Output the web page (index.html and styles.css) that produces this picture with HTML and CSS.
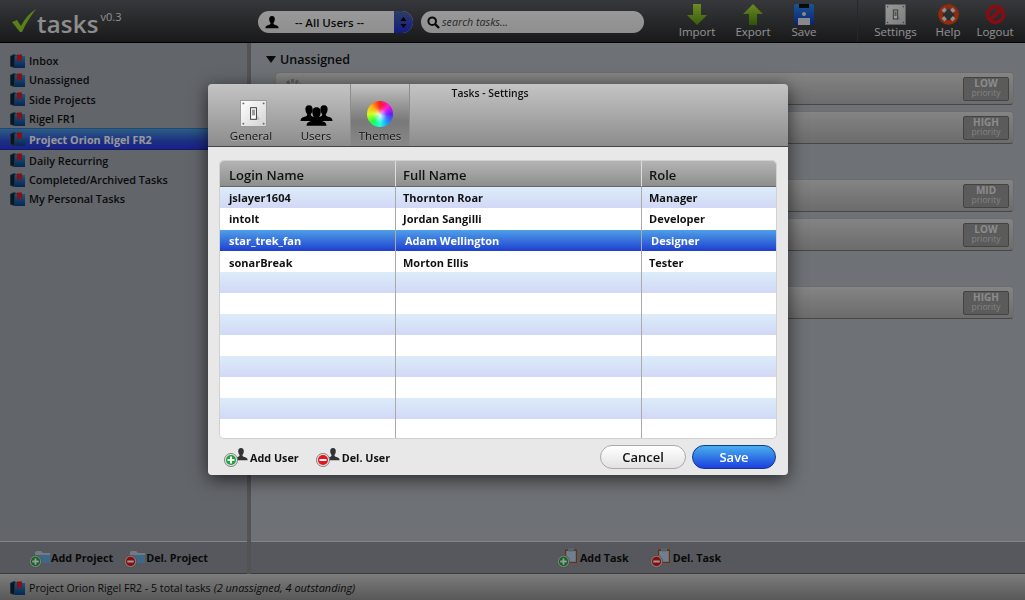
FILE: index.html
```html
<!DOCTYPE html>
<html lang="en">
<head>
    <meta charset="UTF-8">
    <title>Tasks</title>
    <link rel="stylesheet" href="styles.css">
</head>
<body>

    <svg class="defs" width="0" height="0">
        <defs>
            <linearGradient id="book-blue" x1="0" y1="0" x2="0" y2="1">
                <stop offset="0" stop-color="#2a8fd0"/>
                <stop offset="1" stop-color="#0d3f8c"/>
            </linearGradient>
            <linearGradient id="arrow-down" x1="0" y1="0" x2="0" y2="1">
                <stop offset="0" stop-color="#b4ea38"/>
                <stop offset="1" stop-color="#5f9a14"/>
            </linearGradient>
            <linearGradient id="arrow-up" x1="0" y1="0" x2="0" y2="1">
                <stop offset="0" stop-color="#b4ea38"/>
                <stop offset="1" stop-color="#4f8a10"/>
            </linearGradient>
            <linearGradient id="disk-blue" x1="0" y1="0" x2="0" y2="1">
                <stop offset="0" stop-color="#2a90f0"/>
                <stop offset="1" stop-color="#1438c8"/>
            </linearGradient>
            <linearGradient id="plate" x1="0" y1="0" x2="1" y2="1">
                <stop offset="0" stop-color="#ffffff"/>
                <stop offset="1" stop-color="#d2d2d2"/>
            </linearGradient>
            <symbol id="book" viewBox="0 0 15 14">
                <path d="M0 2 L4 0 L7 1.5 V14 L4 14 L0 12.5Z" fill="#27506e"/>
                <path d="M1 2.5 L4 1 V13 L1 12Z" fill="#16222e"/>
                <rect x="5" y="2" width="10" height="12" fill="url(#book-blue)"/>
                <path d="M7 0.5 H12 V8 L9.5 6 L7 8Z" fill="#e01b24"/>
            </symbol>
            <symbol id="plus" viewBox="0 0 14 14">
                <circle cx="7" cy="7" r="6.6" fill="#d8d8d8" stroke="#777" stroke-width=".8"/>
                <circle cx="7" cy="7" r="5" fill="#19a83a"/>
                <path d="M7 3.5 V10.5 M3.5 7 H10.5" stroke="#fff" stroke-width="2"/>
            </symbol>
            <symbol id="minus" viewBox="0 0 14 14">
                <circle cx="7" cy="7" r="6.6" fill="#d8d8d8" stroke="#777" stroke-width=".8"/>
                <circle cx="7" cy="7" r="5" fill="#e8141c"/>
                <path d="M3.5 7 H10.5" stroke="#fff" stroke-width="2.2"/>
            </symbol>
            <symbol id="person" viewBox="0 0 16 16">
                <path d="M8 1 C10.4 1 11.4 2.8 11.2 5 C11 7 10.2 8.2 9.6 9 C9.6 10.4 10.4 10.8 12 11.4 C14 12.1 15.4 12.6 15.6 15 H0.4 C.6 12.6 2 12.1 4 11.4 C5.6 10.8 6.4 10.4 6.4 9 C5.8 8.2 5 7 4.8 5 C4.6 2.8 5.6 1 8 1Z"/>
            </symbol>
            <symbol id="switch" viewBox="0 0 28 28">
                <rect x=".5" y=".5" width="27" height="27" fill="url(#plate)" stroke="#999"/>
                <circle cx="3.5" cy="3.5" r="1" fill="#666"/><circle cx="24.5" cy="3.5" r="1" fill="#666"/>
                <circle cx="3.5" cy="24.5" r="1" fill="#666"/><circle cx="24.5" cy="24.5" r="1" fill="#666"/>
                <path d="M16 14 L21 20 L16 21Z" fill="#c2c2c2"/>
                <rect x="11" y="8" width="6" height="12" fill="#fff" stroke="#333"/>
                <rect x="12.5" y="10" width="3" height="6" fill="#999"/>
            </symbol>
            <symbol id="clip" viewBox="0 0 12 15">
                <rect x="0" y="1.5" width="12" height="13.5" fill="#a8561c"/>
                <rect x="1.2" y="3" width="9.6" height="10.8" fill="#b9d4ee"/>
                <rect x="3" y="0" width="6" height="3.5" rx="1" fill="#8fa5b8"/>
            </symbol>
            <symbol id="folder" viewBox="0 0 15 12">
                <path d="M0 2 Q0 0 2 0 H6 L8 2 H15 V12 H0Z" fill="#68aee4"/>
                <path d="M0 2 Q0 0 2 0 H6 L8 2 H15 V4 H0Z" fill="#c3ccd4"/>
            </symbol>
        </defs>
    </svg>

    <div class="app">

        <!-- Top bar -->
        <header class="topbar">
            <div class="logo">
                <svg class="logo-check" width="25" height="24" viewBox="0 0 25 24">
                    <path d="M0 13 L5 11 L9 17 C13 9 18 4 24 0 C19 7 14 14 10 23 H8Z" fill="#96d42e"/>
                </svg>
                <span class="logo-text">tasks</span>
                <span class="logo-version">v0.3</span>
            </div>
            <div class="user-select">
                <svg class="pill-icon" width="14" height="14"><use href="#person"/></svg>
                <span class="user-select-label">-- All Users --</span>
                <span class="user-select-arrows">
                    <svg width="7" height="11" viewBox="0 0 7 11"><path d="M3.5 0 L6.5 4 H.5Z M.5 7 H6.5 L3.5 11Z"/></svg>
                </span>
            </div>
            <div class="search">
                <svg width="13" height="13" viewBox="0 0 13 13"><circle cx="5.2" cy="5.2" r="3.8" fill="none" stroke="#111" stroke-width="2"/><path d="M8 8 L12 12" stroke="#111" stroke-width="2.4"/></svg>
                <span class="search-text">search tasks...</span>
            </div>
            <nav class="tools">
                <a class="tool tool-import">
                    <svg width="20" height="21" viewBox="0 0 20 21"><path d="M6 0 H14 V11 H20 L10 21 L0 11 H6Z" fill="url(#arrow-down)"/></svg>
                    Import
                </a>
                <a class="tool tool-export">
                    <svg width="20" height="21" viewBox="0 0 20 21"><path d="M10 0 L20 10 H14 V21 H6 V10 H0Z" fill="url(#arrow-up)"/></svg>
                    Export
                </a>
                <a class="tool tool-save">
                    <svg width="20" height="21" viewBox="0 0 20 21"><rect width="20" height="21" rx="2" fill="url(#disk-blue)"/><rect x="5" y="0" width="10" height="4" fill="#111"/><rect x="4" y="14" width="12" height="7" fill="#e6e6e6"/><circle cx="10" cy="10" r="2" fill="#e6e6e6"/></svg>
                    Save
                </a>
            </nav>
            <nav class="tools tools-right">
                <a class="tool tool-settings">
                    <svg width="21" height="21"><use href="#switch"/></svg>
                    Settings
                </a>
                <a class="tool tool-help">
                    <svg width="23" height="21" viewBox="0 0 23 21"><circle cx="11.5" cy="10.5" r="8" fill="none" stroke="#f04a14" stroke-width="4.6"/><path d="M6 5 L8.5 7.5 M17 5 L14.5 7.5 M6 16 L8.5 13.5 M17 16 L14.5 13.5" stroke="#eee" stroke-width="4"/></svg>
                    Help
                </a>
                <a class="tool tool-logout">
                    <svg width="21" height="21" viewBox="0 0 21 21"><circle cx="10.5" cy="10.5" r="8" fill="none" stroke="#e8141c" stroke-width="3.4"/><path d="M5 16 L16 5" stroke="#e8141c" stroke-width="3.4"/></svg>
                    Logout
                </a>
            </nav>
        </header>

        <div class="columns">

            <!-- Project list -->
            <aside class="sidebar">
                <ul class="projects">
                    <li><svg class="book"><use href="#book"/></svg>Inbox</li>
                    <li><svg class="book"><use href="#book"/></svg>Unassigned</li>
                    <li><svg class="book"><use href="#book"/></svg>Side Projects</li>
                    <li><svg class="book"><use href="#book"/></svg>Rigel FR1</li>
                    <li class="active"><svg class="book"><use href="#book"/></svg>Project Orion Rigel FR2</li>
                    <li><svg class="book"><use href="#book"/></svg>Daily Recurring</li>
                    <li><svg class="book"><use href="#book"/></svg>Completed/Archived Tasks</li>
                    <li><svg class="book"><use href="#book"/></svg>My Personal Tasks</li>
                </ul>
                <div class="actions actions-side">
                    <a class="action">
                        <span class="action-icon"><svg class="action-folder" width="15" height="12"><use href="#folder"/></svg><svg class="action-badge" width="13" height="13"><use href="#plus"/></svg></span>
                        Add Project
                    </a>
                    <a class="action">
                        <span class="action-icon"><svg class="action-folder" width="15" height="12"><use href="#folder"/></svg><svg class="action-badge" width="13" height="13"><use href="#minus"/></svg></span>
                        Del. Project
                    </a>
                </div>
            </aside>

            <!-- Tasks -->
            <main class="main">
                <div class="task-list">
                    <section class="section">
                        <h3 class="section-title"><span class="arrow"></span>Unassigned</h3>
                        <div class="task">
                            <svg class="gear" width="22" height="22" viewBox="0 0 22 22"><circle cx="11" cy="11" r="7" fill="none" stroke="#999" stroke-width="4" stroke-dasharray="3 1.4"/></svg>
                            <div class="badge"><b>LOW</b><span>priority</span></div>
                        </div>
                        <div class="task"><div class="badge"><b>HIGH</b><span>priority</span></div></div>
                    </section>
                    <section class="section">
                        <div class="task"><div class="badge"><b>MID</b><span>priority</span></div></div>
                        <div class="task"><div class="badge"><b>LOW</b><span>priority</span></div></div>
                    </section>
                    <section class="section">
                        <div class="task"><div class="badge"><b>HIGH</b><span>priority</span></div></div>
                    </section>
                </div>
                <div class="actions actions-main">
                    <a class="action">
                        <span class="action-icon"><svg class="action-clip" width="12" height="15"><use href="#clip"/></svg><svg class="action-badge" width="13" height="13"><use href="#plus"/></svg></span>
                        Add Task
                    </a>
                    <a class="action">
                        <span class="action-icon"><svg class="action-clip" width="12" height="15"><use href="#clip"/></svg><svg class="action-badge" width="13" height="13"><use href="#minus"/></svg></span>
                        Del. Task
                    </a>
                </div>
            </main>
        </div>

        <footer class="statusbar">
            <svg class="book"><use href="#book"/></svg>
            <span>Project Orion Rigel FR2 - 5 total tasks</span>
            <em>(2 unassigned, 4 outstanding)</em>
        </footer>
    </div>

    <div class="overlay"></div>

    <!-- Settings dialog -->
    <div class="dialog">
        <div class="dialog-head">
            <div class="dialog-title">Tasks - Settings</div>
            <div class="tabs">
                <div class="tab tab-general">
                    <svg width="27" height="27"><use href="#switch"/></svg>
                    General
                </div>
                <div class="tab tab-users">
                    <svg width="33" height="24" viewBox="0 0 33 24">
                        <use href="#person" x="0" y="0" width="18" height="20"/>
                        <use href="#person" x="15" y="0" width="18" height="20"/>
                        <use href="#person" x="6" y="3" width="21" height="21"/>
                    </svg>
                    Users
                </div>
                <div class="tab tab-themes">
                    <div class="color-wheel"></div>
                    Themes
                </div>
            </div>
        </div>

        <div class="dialog-body">
            <table class="users-table">
                <thead>
                    <tr><th class="col-login">Login Name</th><th class="col-name">Full Name</th><th class="col-role">Role</th></tr>
                </thead>
                <tbody>
                    <tr><td>jslayer1604</td><td>Thornton Roar</td><td>Manager</td></tr>
                    <tr><td>intolt</td><td>Jordan Sangilli</td><td>Developer</td></tr>
                    <tr class="selected"><td>star_trek_fan</td><td>Adam Wellington</td><td>Designer</td></tr>
                    <tr><td>sonarBreak</td><td>Morton Ellis</td><td>Tester</td></tr>
                    <tr><td></td><td></td><td></td></tr>
                    <tr><td></td><td></td><td></td></tr>
                    <tr><td></td><td></td><td></td></tr>
                    <tr><td></td><td></td><td></td></tr>
                    <tr><td></td><td></td><td></td></tr>
                    <tr><td></td><td></td><td></td></tr>
                    <tr><td></td><td></td><td></td></tr>
                    <tr><td></td><td></td><td></td></tr>
                </tbody>
            </table>

            <div class="dialog-foot">
                <a class="action action-user">
                    <span class="action-icon"><svg class="action-person" width="14" height="14"><use href="#person"/></svg><svg class="action-badge" width="14" height="14"><use href="#plus"/></svg></span>
                    Add User
                </a>
                <a class="action action-user">
                    <span class="action-icon"><svg class="action-person" width="14" height="14"><use href="#person"/></svg><svg class="action-badge" width="14" height="14"><use href="#minus"/></svg></span>
                    Del. User
                </a>
                <button class="btn btn-cancel">Cancel</button>
                <button class="btn btn-save">Save</button>
            </div>
        </div>
    </div>

</body>
</html>
```

FILE: styles.css
```css
* {
    box-sizing: border-box;
}

html, body {
    height: 100%;
}

body {
    margin: 0;
    font-family: "Open Sans", "DejaVu Sans", sans-serif;
    font-size: 11px;
    font-weight: 600;
    color: #111;
    overflow: hidden;
}

.defs {
    position: absolute;
}

.app {
    height: 600px;
    display: flex;
    flex-direction: column;
    background: #b7bcc3;
}

/* Top bar */
.topbar {
    height: 43px;
    flex: none;
    display: flex;
    align-items: flex-start;
    padding-left: 12px;
    background: linear-gradient(#5c5e63, #2a2b2d);
    border-bottom: 1px solid #000;
}

.logo {
    width: 246px;
    height: 42px;
    display: flex;
    align-items: flex-start;
    flex: none;
}

.logo-check {
    margin-top: 9px;
}

.logo-text {
    margin: 7px 0 0 0;
    font-size: 24px;
    line-height: 34px;
    font-weight: 600;
    letter-spacing: 0.2px;
    color: #ececec;
}

.logo-version {
    margin: 10px 0 0 2px;
    font-size: 11px;
    line-height: 14px;
    font-weight: 400;
    color: #eee;
}

.user-select {
    width: 155px;
    height: 22px;
    margin-top: 11px;
    display: flex;
    align-items: center;
    flex: none;
    padding-left: 7px;
    border-radius: 11px;
    overflow: hidden;
    background: linear-gradient(#fff, #eee);
    font-size: 11.5px;
}

.user-select-label {
    flex: 1;
    text-align: center;
    padding-right: 14px;
}

.user-select-arrows {
    width: 19px;
    height: 22px;
    display: flex;
    align-items: center;
    justify-content: center;
    background: linear-gradient(#4f66a8, #2030d8);
}

.search {
    width: 223px;
    height: 22px;
    margin: 11px 0 0 8px;
    flex: none;
    display: flex;
    align-items: center;
    gap: 2px;
    padding-left: 6px;
    border-radius: 11px;
    background: linear-gradient(#fff, #eee);
}

.search-text {
    font-size: 10.7px;
    line-height: 20px;
    margin-bottom: 1px;
    font-style: italic;
    font-weight: 400;
    color: #444;
}

.tools {
    display: flex;
    height: 42px;
}

.tool {
    display: flex;
    flex-direction: column;
    align-items: center;
    padding-top: 4px;
    font-size: 11.5px;
    line-height: 14px;
    font-weight: 400;
    color: #f0f0f0;
    white-space: nowrap;
}

.tool-import { margin-left: 35px; width: 36px; }
.tool-export { margin-left: 20px; width: 36px; }
.tool-save { margin-left: 18px; width: 30px; }

.tools-right {
    margin-left: 38px;
    padding-left: 16px;
    border-left: 1px solid #444;
}

.tool-settings { width: 43px; }
.tool-help { margin-left: 19px; width: 24px; }
.tool-logout { margin-left: 16px; width: 38px; }

/* Columns */
.columns {
    flex: 1;
    display: flex;
    min-height: 0;
}

.sidebar {
    width: 251px;
    flex: none;
    display: flex;
    flex-direction: column;
    background: #a3a8b1;
    border-right: 4px solid #8a8a8a;
}

.projects {
    flex: 1;
    list-style: none;
    margin: 0;
    padding: 8px 0 0;
}

.projects li {
    height: 19.3px;
    display: flex;
    align-items: center;
    padding-left: 10px;
    font-size: 10.8px;
    white-space: nowrap;
}

.projects li.active {
    height: 22px;
    margin-bottom: 0.5px;
    font-weight: 700;
    color: #fff;
    background: linear-gradient(#4a9ae0, #3050d8 60%, #2d35e6);
    border-top: 1px solid #2f7fb8;
    border-bottom: 1px solid #2030a0;
}

.book {
    width: 15px;
    height: 14px;
    flex: none;
    margin-right: 4px;
}

.actions {
    height: 33px;
    flex: none;
    display: flex;
    align-items: center;
    justify-content: center;
    background: #8f939b;
    border-top: 1px solid #d9dce0;
    border-bottom: 1px solid #666;
}

.actions-side {
    gap: 11px;
    padding-right: 10px;
}

.actions-main {
    gap: 21px;
    padding-left: 2px;
}

.action {
    display: flex;
    align-items: center;
    font-size: 10.8px;
    font-weight: 700;
    color: #111;
    white-space: nowrap;
}

.action-icon {
    position: relative;
    width: 21px;
    height: 20px;
    margin-right: 1px;
    flex: none;
}

.actions-main .action-icon {
    margin-right: 2px;
}

.action-folder,
.action-clip,
.action-person,
.action-badge {
    position: absolute;
}

.action-folder {
    right: 0;
    top: 3px;
}

.action-clip {
    right: 1px;
    top: 0;
}

.action-person {
    right: 0;
    top: 0;
    fill: #333;
}

.action-badge {
    left: 0;
    bottom: 0;
}

.action-user .action-icon {
    width: 24px;
    margin-right: 2px;
}

.main {
    flex: 1;
    min-width: 0;
    display: flex;
    flex-direction: column;
}

.task-list {
    flex: 1;
    padding: 8px 11px 0 24px;
}

.section + .section {
    margin-top: 35px;
}

.section-title {
    margin: 0 0 5px -9px;
    height: 16px;
    display: flex;
    align-items: center;
    font-size: 12.5px;
    font-weight: 600;
    color: #111;
}

.arrow {
    width: 0;
    height: 0;
    margin-right: 4px;
    border-left: 5px solid transparent;
    border-right: 5px solid transparent;
    border-top: 7px solid #111;
}

.task {
    position: relative;
    height: 33px;
    display: flex;
    align-items: center;
    justify-content: flex-end;
    padding-right: 4px;
    border: 1px solid #b5b5b5;
    border-bottom-color: #777;
    border-radius: 4px;
    background: linear-gradient(#dcdcdc, #b4b4b4);
}

.task + .task {
    margin-top: 6px;
}

.gear {
    position: absolute;
    left: 6px;
    top: 4px;
}

.badge {
    width: 46px;
    height: 24px;
    display: flex;
    flex-direction: column;
    align-items: center;
    justify-content: center;
    padding-bottom: 2px;
    border-radius: 2px;
    border: 1px solid #717171;
    background: #989898;
    color: #d8d8d8;
    font-size: 8.5px;
    line-height: 9px;
    font-weight: 400;
}

.badge b {
    font-size: 10px;
    line-height: 9px;
    font-weight: 700;
    color: #e8e8e8;
}

.statusbar {
    height: 26px;
    flex: none;
    display: flex;
    align-items: center;
    gap: 3px;
    padding: 1px 0 0 10px;
    font-size: 10.65px;
    font-weight: 400;
    background: linear-gradient(#d0d0d0, #939393);
    color: #111;
}

.statusbar .book {
    margin-right: 1px;
}

.statusbar em {
    font-size: 10.9px;
}

.overlay {
    position: fixed;
    inset: 0;
    background: rgba(0, 0, 0, 0.4);
}

/* Settings dialog */
.dialog {
    position: absolute;
    left: 208px;
    top: 84px;
    width: 580px;
    height: 391px;
    display: flex;
    flex-direction: column;
    border-radius: 4px;
    overflow: hidden;
    box-shadow: 0 4px 18px rgba(0, 0, 0, 0.65);
}

.dialog-head {
    height: 63px;
    flex: none;
    position: relative;
    background: linear-gradient(#c4c4c4, #8c8c8c);
    border-bottom: 1px solid #444;
}

.dialog-title {
    position: absolute;
    left: 0;
    right: 16px;
    top: 2px;
    text-align: center;
    font-size: 10.4px;
    line-height: 14px;
}

.tabs {
    display: flex;
    height: 62px;
    padding-left: 13px;
}

.tab {
    width: 60px;
    display: flex;
    flex-direction: column;
    align-items: center;
    justify-content: flex-end;
    padding-bottom: 3px;
    font-size: 11.5px;
    line-height: 14px;
    font-weight: 400;
    text-shadow: 0 1px 0 rgba(255, 255, 255, 0.25);
}

.tab svg, .color-wheel {
    margin-bottom: 2px;
}

.tab-general svg {
    margin-left: 4px;
}

.tab-users {
    margin-left: 5px;
}

.tab-themes {
    margin-left: 4px;
    background: linear-gradient(rgba(0,0,0,0), rgba(0,0,0,0.26) 60%, rgba(0,0,0,0.04));
    border-left: 1px solid #8d8d8d;
    border-right: 1px solid #8d8d8d;
}

.color-wheel {
    width: 26px;
    height: 26px;
    border-radius: 50%;
    background:
        radial-gradient(circle at 50% 55%, rgba(255,255,255,0.85), rgba(255,255,255,0.1) 35%, transparent 50%),
        conic-gradient(#ff1a1a, #ff1ad0, #6a1aff, #1a8cff, #1affe0, #1aff3a, #d4ff1a, #ffa81a, #ff1a1a);
}

.dialog-body {
    flex: 1;
    padding: 14px 12px 0;
    background: #e8e8e8;
}

.users-table {
    width: 556px;
    table-layout: fixed;
    border-collapse: separate;
    border-spacing: 0;
    background: #fff;
    border-radius: 4px;
    overflow: hidden;
    box-shadow: 0 0 0 1px #d0d0d0;
}

.users-table th {
    height: 26px;
    padding: 2px 0 0 9px;
    text-align: left;
    font-size: 13px;
    font-weight: 600;
    background: linear-gradient(#b4b4b4, #8e8e8e);
    border-bottom: 1px solid #666;
    border-left: 1px solid #ddd;
}

.users-table th:first-child,
.users-table td:first-child {
    border-left: 0;
}

.col-login { width: 175px; }
.col-name { width: 246px; }

.users-table th.col-name,
.users-table th.col-role {
    padding-left: 7px;
}

.users-table td {
    height: 21px;
    padding: 0 0 1px 7px;
    font-size: 11px;
    font-weight: 700;
    border-left: 1px solid #aaa;
}

.users-table td:first-child {
    padding-left: 9px;
}

.users-table tbody tr:nth-child(odd) td {
    background: linear-gradient(#dcecf9, #d2d8f6);
}

.users-table tbody tr:nth-child(2) td {
    height: 22px;
}

.users-table tbody tr:nth-child(4) td {
    padding: 1px 0 0 7px;
}

.users-table tbody tr:nth-child(4) td:first-child {
    padding-left: 9px;
}

.users-table tbody tr:last-child td {
    height: 19px;
}

.users-table tbody tr.selected td {
    padding: 0 0 0 9px;
    color: #fff;
    background: linear-gradient(#4fa0e8, #1e3fd0);
}

.dialog-foot {
    display: flex;
    align-items: center;
    height: 38px;
    padding-left: 4px;
}

.dialog-foot .action + .action {
    margin-left: 17px;
}

.btn {
    width: 86px;
    height: 24px;
    padding: 0;
    font-family: inherit;
    font-size: 13px;
    font-weight: 600;
    border-radius: 12px;
}

.btn-cancel {
    margin-left: auto;
    color: #111;
    border: 1px solid #aaa;
    background: linear-gradient(#fff, #e2e2e2);
}

.btn-save {
    width: 84px;
    margin-left: 6px;
    color: #fff;
    border: 1px solid #123a8a;
    background: linear-gradient(#48b0ee, #1d3fe0);
}
```
